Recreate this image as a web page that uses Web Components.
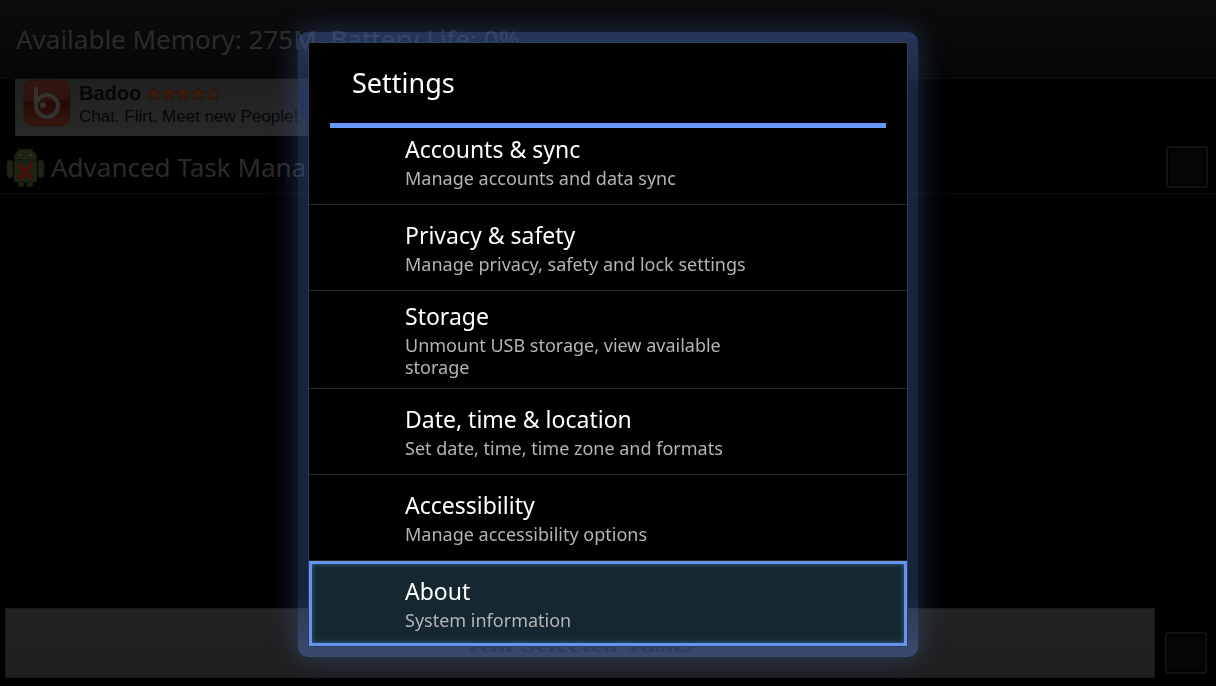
<!DOCTYPE html>
<html lang="en">
<head>
<meta charset="utf-8">
<title>Settings</title>
<style>
html, body { margin: 0; min-height: 100vh; background: #000; }
body { font-family: "Noto Sans", "Open Sans", sans-serif; display: flex; flex-direction: column; overflow: hidden; }
task-manager { flex: 1; }
</style>
</head>
<body>
<task-manager></task-manager>
<settings-dialog heading="Settings">
  <settings-item heading="Accounts &amp; sync" first>Manage accounts and data sync</settings-item>
  <settings-item heading="Privacy &amp; safety">Manage privacy, safety and lock settings</settings-item>
  <settings-item heading="Storage">Unmount USB storage, view available storage</settings-item>
  <settings-item heading="Date, time &amp; location">Set date, time, time zone and formats</settings-item>
  <settings-item heading="Accessibility">Manage accessibility options</settings-item>
  <settings-item heading="About" selected>System information</settings-item>
</settings-dialog>
<script>
class UiElement extends HTMLElement {
  connectedCallback() {
    if (this.shadowRoot) return;
    this.attachShadow({ mode: "open" }).innerHTML = this.render();
    this.ready();
  }
  ready() {}
}

customElements.define("check-box", class extends UiElement {
  render() {
    return `<style>
      :host { display: block; flex: none; width: 42px; height: 42px; }
      input { appearance: none; display: block; box-sizing: border-box; width: 42px; height: 42px; margin: 0;
        border: 2px solid #121212; border-radius: 3px; background: #050505; box-shadow: inset 0 0 0 2px #010101; }
    </style><input type="checkbox">`;
  }
  ready() { this.shadowRoot.querySelector("input").setAttribute("aria-label", this.getAttribute("label")); }
});

customElements.define("status-header", class extends UiElement {
  render() {
    return `<style>
      :host { display: flex; align-items: center; height: 78px; padding: 0 16px; border-bottom: 1px solid #0d0d0d;
        background: linear-gradient(#0c0c0c, #060606); color: #2b2b2b; font-size: 26px; line-height: 36px; white-space: pre; }
    </style><slot></slot>`;
  }
});

customElements.define("star-rating", class extends UiElement {
  render() {
    const star = x => `<path transform="translate(${x} 1)" d="M7 0l2 5 5 .5-3.800 3.500 1.200 5L7 11.500 2.600 14l1.200-5L0 5.500 5 5z"/>`;
    return `<style>:host { display: block; } svg { display: block; }</style>
    <svg width="74" height="16" viewBox="0 0 74 16" fill="#3c1a0c" stroke="#26150f" stroke-width="1">
      ${[0, 15, 29, 44].map(star).join("")}
      <g fill="#242424" stroke="#26150f">${star(59)}</g>
      <path fill="#3c1a0c" stroke="none" d="M66 2v10.500l-4 2 1-4.500-3.500-3.300 4.500-.5z"/>
    </svg>`;
  }
});

customElements.define("ad-banner", class extends UiElement {
  render() {
    return `<style>
      :host { display: flex; box-sizing: border-box; width: 480px; height: 57px; margin-left: 15px; padding: 0 0 0 8px;
        background: linear-gradient(#202020, #282828); color: #070707; font-family: "Liberation Sans", Arial, sans-serif; }
      .logo { flex: none; }
      .copy { width: 222px; padding: 2px 0 0 8px; white-space: nowrap; }
      .name { display: flex; align-items: center; gap: 6px; font-size: 20px; line-height: 24px; font-weight: bold; }
      .tag { font-size: 17px; line-height: 24px; }
      .go { width: 120px; height: 32px; margin: 8px 0 0 0; border: 0; border-radius: 5px; background: #18213f; }
    </style>
    <svg class="logo" width="48" height="48" viewBox="0 0 48 48" aria-hidden="true">
      <defs><linearGradient id="g" x1="0" y1="0" x2="0" y2="1"><stop offset="0" stop-color="#2c120f"/><stop offset=".5" stop-color="#280906"/><stop offset="1" stop-color="#35190f"/></linearGradient></defs>
      <rect x="1" y="1" width="46" height="46" rx="9" fill="url(#g)" stroke="#2b1512"/>
      <path d="M2 22V10a8 8 0 0 1 8-8h28a8 8 0 0 1 8 8v10Q24 24 2 22z" fill="#3b1d18" opacity=".4"/>
      <g fill="none" stroke="#353130" stroke-width="4" stroke-linecap="round"><path d="M13 10v17"/><circle cx="24" cy="27" r="11"/></g>
      <circle cx="20" cy="26" r="3" fill="#353130"/>
    </svg>
    <div class="copy"><div class="name"><span>Badoo</span><star-rating></star-rating></div><div class="tag">Chat. Flirt. Meet new People!</div></div>
    <button class="go" aria-label="Open"></button>`;
  }
});

customElements.define("task-row", class extends UiElement {
  render() {
    return `<style>
      :host { display: flex; align-items: center; height: 52px; margin-top: 5px; padding: 0 8px 0 6px; border-bottom: 1px solid #0b0b0b;
        color: #2b2b2b; font-size: 26px; line-height: 36px; }
      svg { flex: none; margin-right: 6px; }
      .name { flex: 1; }
    </style>
    <svg width="39" height="42" viewBox="0 0 39 42" aria-hidden="true">
      <g stroke="#1b1f12" stroke-width="1"><path d="M12 1l3 5M27 1l-3 5"/></g>
      <g fill="#1d2413" stroke="#12160c">
        <path d="M8 14C8 6 13 3 19.500 3S31 6 31 14z"/><path d="M8 14h23v20q0 2-2 2H10q-2 0-2-2z"/>
        <rect x="1" y="14" width="6" height="18" rx="3"/><rect x="32" y="14" width="6" height="18" rx="3"/>
        <path d="M12 36h6v4q-3 2-6 0zM21 36h6v4q-3 2-6 0z"/>
      </g>
      <circle cx="14" cy="9" r="1" fill="#3c3c3c"/><circle cx="25" cy="9" r="1" fill="#3c3c3c"/>
      <path d="M13 19l13 13M26 18L13 33" stroke="#4a0f0b" stroke-width="4"/>
    </svg>
    <span class="name"><slot></slot></span><check-box label="Select Advanced Task Manager"></check-box>`;
  }
});

customElements.define("action-bar", class extends UiElement {
  render() {
    return `<style>
      :host { display: flex; align-items: center; gap: 10px; padding: 0 9px 8px 5px; }
      button { flex: 1; height: 70px; border: 1px solid #1a1a1a; padding: 0; background: linear-gradient(#232323, #1e1e1e);
        color: #0c0c0c; font: bold 28px/32px "Liberation Serif", serif; }
      check-box { margin-top: 20px; }
    </style>
    <button><slot></slot></button><check-box label="Select all"></check-box>`;
  }
});

customElements.define("task-manager", class extends UiElement {
  render() {
    return `<style>
      :host { display: flex; flex-direction: column; }
      action-bar { margin-top: auto; }
    </style>
    <status-header>Available Memory: 275M, Battery Life: 0%</status-header>
    <ad-banner></ad-banner>
    <task-row>Advanced Task Manager</task-row>
    <action-bar>Kill Selected Tasks</action-bar>`;
  }
});

customElements.define("settings-dialog", class extends UiElement {
  render() {
    return `<style>
      :host { position: fixed; inset: 0; display: grid; place-items: center; padding-top: 3px; }
      .frame { width: 51%; min-width: 598px; max-width: 620px; box-sizing: border-box; padding: 11px; border-radius: 10px;
        background: linear-gradient(rgba(68,100,170,.5), rgba(60,88,150,.4) 10%, rgba(60,88,150,.4) 90%, rgba(84,116,190,.5));
        box-shadow: 0 0 28px rgba(72,108,190,.42); }
      section { background: #000; border-radius: 2px; box-shadow: 0 0 0 1px #2d3b5c; }
      h1 { margin: 0 21px; padding: 20px 22px; border-bottom: 5px solid #6a98f8; color: #fff; font-size: 27px; line-height: 40px; font-weight: 400; }
    </style>
    <div class="frame"><section role="dialog" aria-labelledby="t"><h1 id="t"></h1><div role="list"><slot></slot></div></section></div>`;
  }
  ready() { this.shadowRoot.querySelector("h1").textContent = this.getAttribute("heading"); }
});

customElements.define("settings-item", class extends UiElement {
  render() {
    return `<style>
      :host { display: block; }
      button { display: flex; flex-direction: column; justify-content: center; align-items: flex-start; gap: 4px; box-sizing: border-box;
        width: 100%; min-height: 86px; padding: 11px 96px 10px; border: 0; border-bottom: 1px solid #262626; background: none;
        font-family: inherit; text-align: left; }
      :host([first]) button { min-height: 77px; padding-top: 7px; padding-bottom: 15px; }
      :host([selected]) button { min-height: 85px; border: 3px solid #6793ea; padding: 8px 93px; background: #152832; box-shadow: inset 0 0 5px #3b6291; }
      .title { color: #fff; font-size: 23px; line-height: 28px; }
      .summary { max-width: 350px; color: #b4b4b4; font-size: 18px; line-height: 22px; }
    </style><button><span class="title"></span><span class="summary"><slot></slot></span></button>`;
  }
  ready() {
    this.setAttribute("role", "listitem");
    this.shadowRoot.querySelector(".title").textContent = this.getAttribute("heading");
  }
});
</script>
</body>
</html>
